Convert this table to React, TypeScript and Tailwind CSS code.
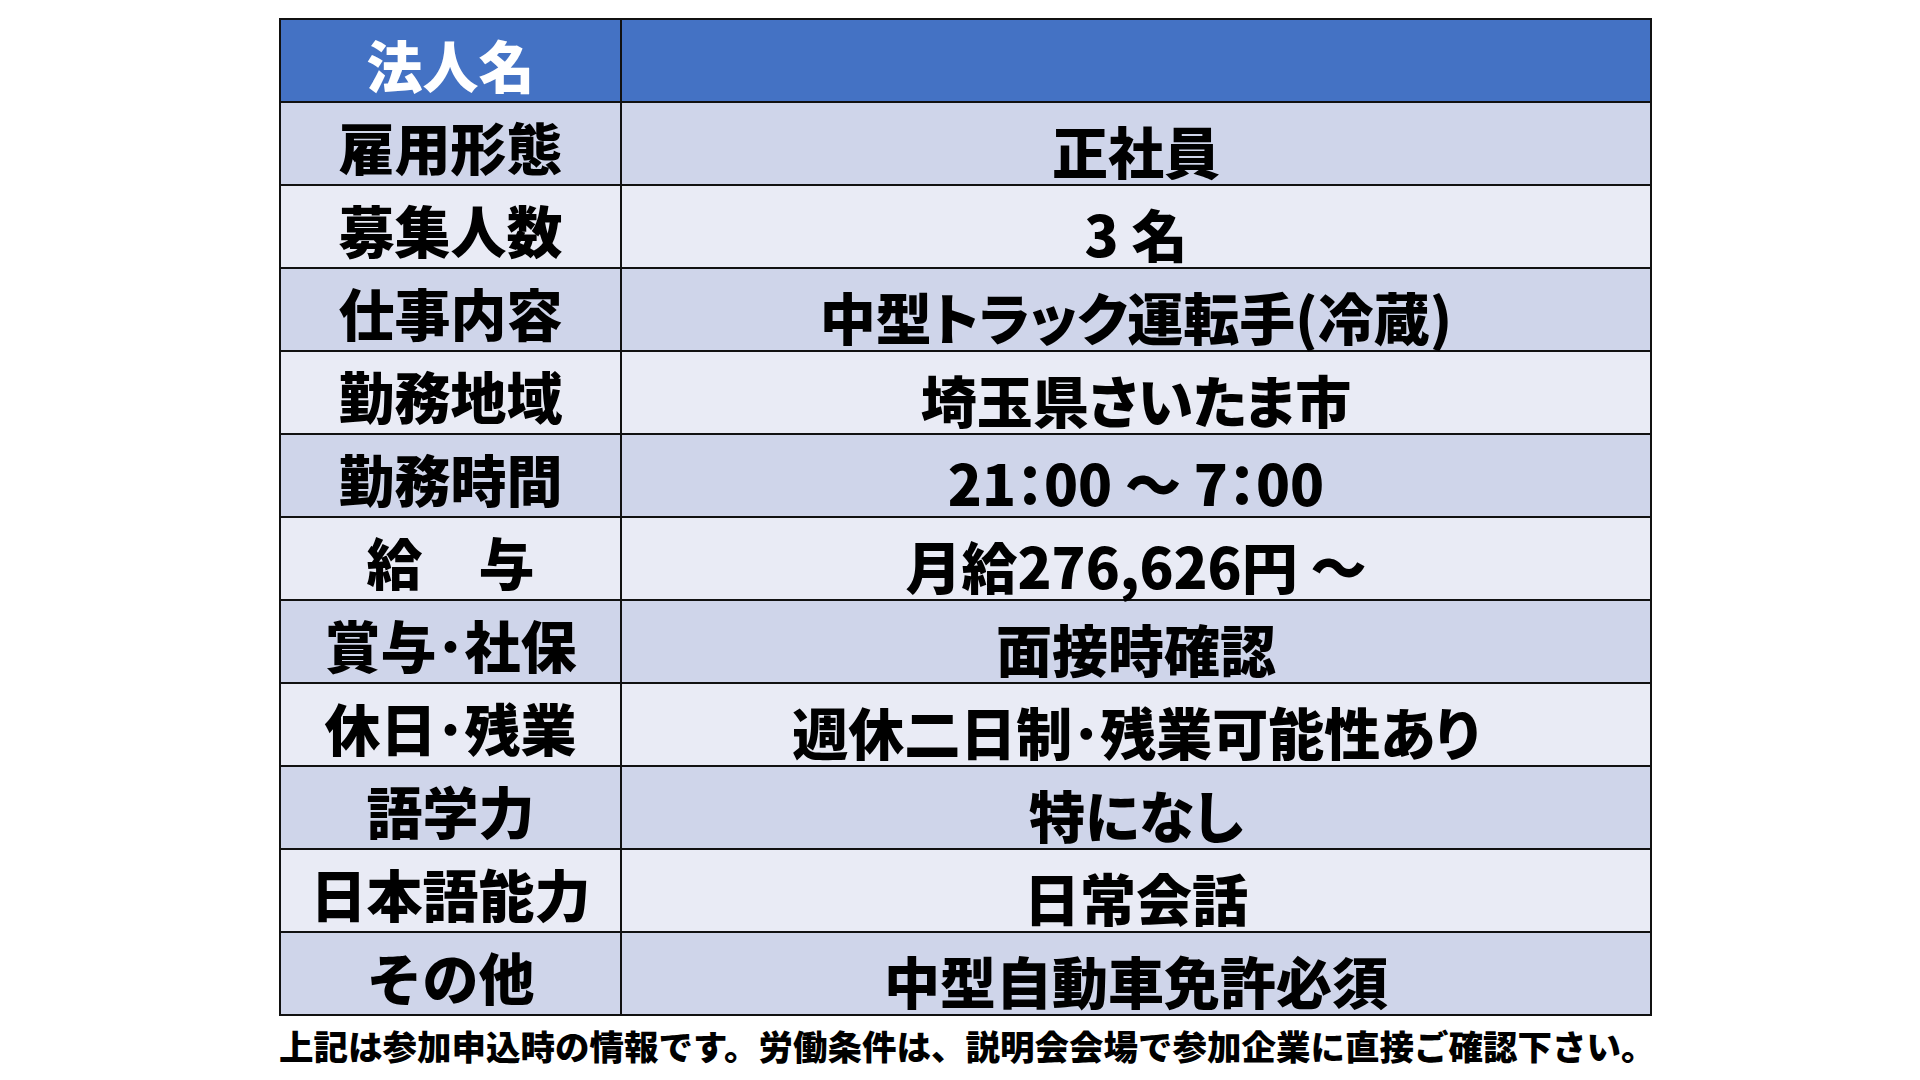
import React from 'react';

type Row = {
  label: string;
  value: string;
};

const rows: Row[] = [
  { label: '雇用形態', value: '正社員' },
  { label: '募集人数', value: '3 名' },
  { label: '仕事内容', value: '中型トラック運転手(冷蔵)' },
  { label: '勤務地域', value: '埼玉県さいたま市' },
  { label: '勤務時間', value: '21：00 ～ 7：00' },
  { label: '給　与', value: '月給276,626円 ～' },
  { label: '賞与･社保', value: '面接時確認' },
  { label: '休日･残業', value: '週休二日制･残業可能性あり' },
  { label: '語学力', value: '特になし' },
  { label: '日本語能力', value: '日常会話' },
  { label: 'その他', value: '中型自動車免許必須' },
];

const App: React.FC = () => {
  return (
    <div className="w-[1920px] h-[1080px] bg-white font-['Noto_Sans_CJK_JP',sans-serif] text-black overflow-hidden">
      <div className="pt-[18px] pl-[279px]">
        <div className="w-[1373px] border-2 border-[#111]">
          {/* Header row */}
          <div className="grid grid-cols-[341px_1fr] h-[81px] bg-[#4472C4]">
            <div className="flex items-center justify-center border-r-2 border-[#111] pt-[6px] text-[56px] leading-none font-black text-white">
              法人名
            </div>
            <div />
          </div>

          {rows.map((row, i) => (
            <div
              key={row.label}
              className={`grid grid-cols-[341px_1fr] h-[83px] border-t-2 border-[#111] ${
                i % 2 === 0 ? 'bg-[#CFD5EA]' : 'bg-[#E9EBF5]'
              }`}
            >
              <div className="flex items-center justify-center border-r-2 border-[#111] pt-[4px] text-[56px] leading-none font-black">
                {row.label}
              </div>
              <div className="flex items-center justify-center pt-[12px] text-[56px] leading-none font-black [font-feature-settings:'palt']">
                {row.value}
              </div>
            </div>
          ))}
        </div>

        <p className="mt-[12px] text-[34.5px] leading-none font-black whitespace-nowrap">
          上記は参加申込時の情報です。労働条件は、説明会会場で参加企業に直接ご確認下さい。
        </p>
      </div>
    </div>
  );
};

export default App;
